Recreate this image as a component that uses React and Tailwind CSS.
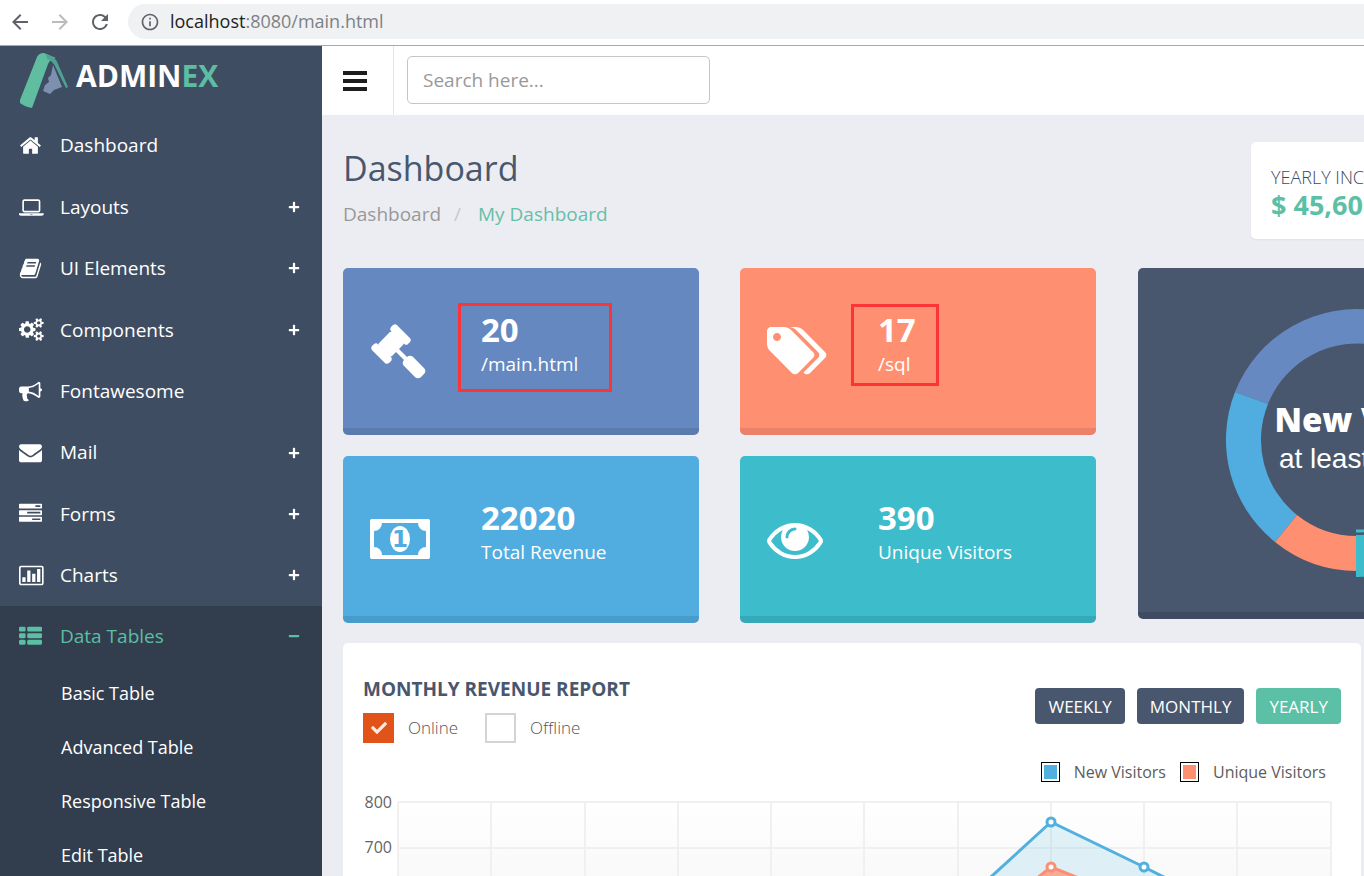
import { useState } from "react";
import { FaCheck, FaPlus, FaMinus } from "react-icons/fa";
import { MdArrowBack, MdArrowForward, MdRefresh, MdInfoOutline } from "react-icons/md";

const icons = {
  home: {
    width: 1792,
    path: "M1472 992v480q0 26-19 45t-45 19h-384v-384h-256v384h-384q-26 0-45-19t-19-45v-480q0-1 .5-3t.5-3l575-474 575 474q1 2 1 6zm223-69l-62 74q-8 9-21 11h-3q-13 0-21-7l-692-577-692 577q-12 8-24 7-13-2-21-11l-62-74q-8-10-7-23.5t11-21.5l719-599q32-26 76-26t76 26l244 204v-195q0-14 9-23t23-9h192q14 0 23 9t9 23v408l219 182q10 8 11 21.5t-7 23.5z",
  },
  laptop: {
    width: 1920,
    path: "M416 1280q-66 0-113-47t-47-113v-704q0-66 47-113t113-47h1088q66 0 113 47t47 113v704q0 66-47 113t-113 47h-1088zm-32-864v704q0 13 9.5 22.5t22.5 9.5h1088q13 0 22.5-9.5t9.5-22.5v-704q0-13-9.5-22.5t-22.5-9.5h-1088q-13 0-22.5 9.5t-9.5 22.5zm1376 928h160v96q0 40-47 68t-113 28h-1600q-66 0-113-28t-47-68v-96h1760zm-720 96q16 0 16-16t-16-16h-160q-16 0-16 16t16 16h160z",
  },
  book: {
    width: 1792,
    path: "M1703 478q40 57 18 129l-275 906q-19 64-76.5 107.5t-122.5 43.5h-923q-77 0-148.5-53.5t-99.5-131.5q-24-67-2-127 0-4 3-27t4-37q1-8-3-21.5t-3-19.5q2-11 8-21t16.5-23.5 16.5-23.5q23-38 45-91.5t30-91.5q3-10 .5-30t-.5-28q3-11 17-28t17-23q21-36 42-92t25-90q1-9-2.5-32t.5-28q4-13 22-30.5t22-22.5q19-26 42.5-84.5t27.5-96.5q1-8-3-25.5t-2-26.5q2-8 9-18t18-23 17-21q8-12 16.5-30.5t15-35 16-36 19.5-32 26.5-23.5 36-11.5 47.5 5.5l-1 3q38-9 51-9h761q74 0 114 56t18 130l-274 906q-36 119-71.5 153.5t-128.5 34.5h-869q-27 0-38 15-11 16-1 43 24 70 144 70h923q29 0 56-15.5t35-41.5l300-987q7-22 5-57 38 15 59 43zm-1064 2q-4 13 2 22.5t20 9.5h608q13 0 25.5-9.5t16.5-22.5l21-64q4-13-2-22.5t-20-9.5h-608q-13 0-25.5 9.5t-16.5 22.5zm-83 256q-4 13 2 22.5t20 9.5h608q13 0 25.5-9.5t16.5-22.5l21-64q4-13-2-22.5t-20-9.5h-608q-13 0-25.5 9.5t-16.5 22.5z",
  },
  cogs: {
    width: 1920,
    path: "M896 896q0-106-75-181t-181-75-181 75-75 181 75 181 181 75 181-75 75-181zm768 512q0-52-38-90t-90-38-90 38-38 90q0 53 37.5 90.5t90.5 37.5 90.5-37.5 37.5-90.5zm0-1024q0-52-38-90t-90-38-90 38-38 90q0 53 37.5 90.5t90.5 37.5 90.5-37.5 37.5-90.5zm-384 421v185q0 10-7 19.5t-16 10.5l-155 24q-11 35-32 76 34 48 90 115 7 11 7 20 0 12-7 19-23 30-82.5 89.5t-78.5 59.5q-11 0-21-7l-115-90q-37 19-77 31-11 108-23 155-7 24-30 24h-186q-11 0-20-7.5t-10-17.5l-23-153q-34-10-75-31l-118 89q-7 7-20 7-11 0-21-8-144-133-144-160 0-9 7-19 10-14 41-53t47-61q-23-44-35-82l-152-24q-10-1-17-9.5t-7-19.5v-185q0-10 7-19.5t16-10.5l155-24q11-35 32-76-34-48-90-115-7-11-7-20 0-12 7-20 22-30 82-89t79-59q11 0 21 7l115 90q34-18 77-32 11-108 23-154 7-24 30-24h186q11 0 20 7.5t10 17.5l23 153q34 10 75 31l118-89q8-7 20-7 11 0 21 8 144 133 144 160 0 8-7 19-12 16-42 54t-45 60q23 48 34 82l152 23q10 2 17 10.5t7 19.5zm640 533v140q0 16-149 31-12 27-30 52 51 113 51 138 0 4-4 7-122 71-124 71-8 0-46-47t-52-68q-20 2-30 2t-30-2q-14 21-52 68t-46 47q-2 0-124-71-4-3-4-7 0-25 51-138-18-25-30-52-149-15-149-31v-140q0-16 149-31 13-29 30-52-51-113-51-138 0-4 4-7 4-2 35-20t59-34 30-16q8 0 46 46.5t52 67.5q20-2 30-2t30 2q51-71 92-112l6-2q4 0 124 70 4 3 4 7 0 25-51 138 17 23 30 52 149 15 149 31zm0-1024v140q0 16-149 31-12 27-30 52 51 113 51 138 0 4-4 7-122 71-124 71-8 0-46-47t-52-68q-20 2-30 2t-30-2q-14 21-52 68t-46 47q-2 0-124-71-4-3-4-7 0-25 51-138-18-25-30-52-149-15-149-31v-140q0-16 149-31 13-29 30-52-51-113-51-138 0-4 4-7 4-2 35-20t59-34 30-16q8 0 46 46.5t52 67.5q20-2 30-2t30 2q51-71 92-112l6-2q4 0 124 70 4 3 4 7 0 25-51 138 17 23 30 52 149 15 149 31z",
  },
  bullhorn: {
    width: 1792,
    path: "M1664 640q53 0 90.5 37.5t37.5 90.5-37.5 90.5-90.5 37.5v384q0 52-38 90t-90 38q-417-347-812-380-58 19-91 66t-31 100.5 40 92.5q-20 33-23 65.5t6 58 33.5 55 48 50 61.5 50.5q-29 58-111.5 83t-168.5 11.5-132-55.5q-7-23-29.5-87.5t-32-94.5-23-89-15-101 3.5-98.5 22-110.5h-122q-66 0-113-47t-47-113v-192q0-66 47-113t113-47h480q435 0 896-384 52 0 90 38t38 90v384zm-128 604v-954q-394 302-768 343v270q377 42 768 341z",
  },
  envelope: {
    width: 1792,
    path: "M1792 710v794q0 66-47 113t-113 47h-1472q-66 0-113-47t-47-113v-794q44 49 101 87 362 246 497 345 57 42 92.5 65.5t94.5 48 110 24.5h2q51 0 110-24.5t94.5-48 92.5-65.5q170-123 498-345 57-39 100-87zm0-294q0 79-49 151t-122 123q-376 261-468 325-10 7-42.5 31t-54 38.5-52 32.5-57.5 27-50 9h-2q-23 0-50-9t-57.5-27-52-32.5-54-38.5-42.5-31q-91-64-262-182.5t-205-142.5q-62-42-117-115.5t-55-136.5q0-78 41.5-130t118.5-52h1472q65 0 112.5 47t47.5 113z",
  },
  tasks: {
    width: 1792,
    path: "M1024 1408h640v-128h-640v128zm-384-512h1024v-128h-1024v128zm640-512h384v-128h-384v128zm512 832v256q0 26-19 45t-45 19h-1664q-26 0-45-19t-19-45v-256q0-26 19-45t45-19h1664q26 0 45 19t19 45zm0-512v256q0 26-19 45t-45 19h-1664q-26 0-45-19t-19-45v-256q0-26 19-45t45-19h1664q26 0 45 19t19 45zm0-512v256q0 26-19 45t-45 19h-1664q-26 0-45-19t-19-45v-256q0-26 19-45t45-19h1664q26 0 45 19t19 45z",
  },
  chart: {
    width: 1920,
    path: "M160 128h1600q66 0 113 47t47 113v1216q0 66-47 113t-113 47h-1600q-66 0-113-47t-47-113v-1216q0-66 47-113t113-47zm0 128q-13 0-22.5 9.5t-9.5 22.5v1216q0 13 9.5 22.5t22.5 9.5h1600q13 0 22.5-9.5t9.5-22.5v-1216q0-13-9.5-22.5t-22.5-9.5zM256 1024h256v384h-256zM640 512h256v896h-256zM1024 768h256v640h-256zM1408 384h256v1024h-256z",
  },
  thList: {
    width: 1792,
    path: "M512 1248v192q0 40-28 68t-68 28h-320q-40 0-68-28t-28-68v-192q0-40 28-68t68-28h320q40 0 68 28t28 68zm0-512v192q0 40-28 68t-68 28h-320q-40 0-68-28t-28-68v-192q0-40 28-68t68-28h320q40 0 68 28t28 68zm1280 512v192q0 40-28 68t-68 28h-960q-40 0-68-28t-28-68v-192q0-40 28-68t68-28h960q40 0 68 28t28 68zm-1280-1024v192q0 40-28 68t-68 28h-320q-40 0-68-28t-28-68v-192q0-40 28-68t68-28h320q40 0 68 28t28 68zm1280 512v192q0 40-28 68t-68 28h-960q-40 0-68-28t-28-68v-192q0-40 28-68t68-28h960q40 0 68 28t28 68zm0-512v192q0 40-28 68t-68 28h-960q-40 0-68-28t-28-68v-192q0-40 28-68t68-28h960q40 0 68 28t28 68z",
  },
  gavel: {
    width: 1792,
    path: "M1771 1536q0 53-37 90l-107 108q-39 37-91 37-53 0-90-37l-363-364q-38-36-38-90 0-53 43-96l-256-256-126 126q-14 14-34 14t-34-14q2 2 12.5 12t12.5 13 10 11.5 10 13.5 6 13.5 5.5 16.5 1.5 18q0 38-28 68-3 3-16.5 18t-19 20.5-18.5 16.5-22 15.5-22 9-26 4.5q-40 0-68-28l-408-408q-28-28-28-68 0-13 4.5-26t9-22 15.5-22 16.5-18.5 20.5-19 18-16.5q30-28 68-28 10 0 18 1.5t16.5 5.5 13.5 6 13.5 10 11.5 10 13 12.5 12 12.5q-14-14-14-34t14-34l348-348q14-14 34-14t34 14q-2-2-12.5-12t-12.5-13-10-11.5-10-13.5-6-13.5-5.5-16.5-1.5-18q0-38 28-68 3-3 16.5-18t19-20.5 18.5-16.5 22-15.5 22-9 26-4.5q40 0 68 28l408 408q28 28 28 68 0 13-4.5 26t-9 22-15.5 22-16.5 18.5-20.5 19-18 16.5q-30 28-68 28-10 0-18-1.5t-16.5-5.5-13.5-6-13.5-10-11.5-10-13-12.5-12-12.5q14 14 14 34t-14 34l-126 126 256 256q43-43 96-43 52 0 91 37l363 363q37 39 37 91z",
  },
  tags: {
    width: 1920,
    path: "M448 448q0-53-37.5-90.5t-90.5-37.5-90.5 37.5-37.5 90.5 37.5 90.5 90.5 37.5 90.5-37.5 37.5-90.5zm1067 576q0 53-37 90l-491 492q-39 37-91 37-53 0-90-37l-715-716q-38-37-64.5-101t-26.5-117v-416q0-52 38-90t90-38h416q53 0 117 26.5t102 64.5l715 714q37 39 37 91zm384 0q0 53-37 90l-491 492q-39 37-91 37-36 0-59-14t-53-45l470-470q37-37 37-90 0-52-37-91l-715-714q-38-38-102-64.5t-117-26.5h224q53 0 117 26.5t102 64.5l715 714q37 39 37 91z",
  },
  eye: {
    width: 1792,
    path: "M1664 960q-152-236-381-353 61 104 61 225 0 185-131.5 316.5t-316.5 131.5-316.5-131.5-131.5-316.5q0-121 61-225-229 117-381 353 133 205 333.5 326.5t434.5 121.5 434.5-121.5 333.5-326.5zm-720-384q0-20-14-34t-34-14q-125 0-214.5 89.5t-89.5 214.5q0 20 14 34t34 14 34-14 14-34q0-86 61-147t147-61q20 0 34-14t14-34zm848 384q0 34-20 69-140 230-376.5 368.5t-499.5 138.5-499.5-139-376.5-368q-20-35-20-69t20-69q140-229 376.5-368t499.5-139 499.5 139 376.5 368q20 35 20 69z",
  },
};

const navItems = [
  { label: "Dashboard", icon: "home" },
  { label: "Layouts", icon: "laptop", expandable: true },
  { label: "UI Elements", icon: "book", expandable: true },
  { label: "Components", icon: "cogs", expandable: true },
  { label: "Fontawesome", icon: "bullhorn" },
  { label: "Mail", icon: "envelope", expandable: true },
  { label: "Forms", icon: "tasks", expandable: true },
  { label: "Charts", icon: "chart", expandable: true },
];

const tableItems = ["Basic Table", "Advanced Table", "Responsive Table", "Edit Table"];

const stats = [
  { value: "20", label: "/main.html", icon: "gavel", color: "bg-[#6488bf] border-[#5b7bae]", mark: "left-[115px] top-[35px] h-[89px] w-[154px]" },
  { value: "17", label: "/sql", icon: "tags", color: "bg-[#ff8f71] border-[#eb8168]", mark: "left-[111px] top-[36px] h-[82px] w-[88px]" },
  { value: "22020", label: "Total Revenue", icon: "money", color: "bg-[#51ade0] border-[#479ccb]" },
  { value: "390", label: "Unique Visitors", icon: "eye", color: "bg-[#3dbccc] border-[#36a9b8]" },
];

const Icon = ({ name, className }) => (
  <svg viewBox={`0 0 ${icons[name].width} 1792`} fill="currentColor" className={className} aria-hidden="true">
    <path d={icons[name].path} />
  </svg>
);

const MoneyIcon = ({ className }) => (
  <svg viewBox="0 0 1920 1792" fill="currentColor" className={className} aria-hidden="true">
    <path d="M1792 1152v-512q-106 0-181-75t-75-181h-1152q0 106-75 181t-181 75v512q106 0 181 75t75 181h1152q0-106 75-181t181-75zm128-832v1152q0 26-19 45t-45 19h-1792q-26 0-45-19t-19-45v-1152q0-26 19-45t45-19h1792q26 0 45 19t19 45z" />
    <ellipse cx="960" cy="896" rx="320" ry="416" />
    <text x="960" y="1152" textAnchor="middle" fontSize="740" fontWeight="700" fontFamily="DejaVu Sans, sans-serif" fill="#51ade0">1</text>
  </svg>
);

const BrowserBar = () => (
  <div className="flex h-[46px] items-center border-b border-[#a9a9ab] bg-white pb-0.5 pl-2 text-[#5f6368]">
    <button type="button" aria-label="Back" className="mr-4"><MdArrowBack className="size-6" /></button>
    <button type="button" aria-label="Forward" className="mr-4 text-[#b9bbbd]"><MdArrowForward className="size-6" /></button>
    <button type="button" aria-label="Reload" className="mr-4"><MdRefresh className="size-6" /></button>
    <div className="flex h-[35px] flex-1 items-center rounded-l-full bg-[#f0f1f3] pl-3">
      <MdInfoOutline className="mr-2.5 size-5" />
      <span className="text-[18px] text-[#7d8186]"><span className="text-[#202124]">localhost</span>:8080/main.html</span>
    </div>
  </div>
);

const Logo = () => (
  <a href="#" className="flex h-[69px] shrink-0 items-start pl-5 pt-[7px]">
    <svg viewBox="0 0 48 56" className="h-14 w-12" aria-hidden="true">
      <path d="M0 47 17 4Q19 0 24 0L36 5Q30 6 28 11L12 55Q5 54 0 50Z" fill="#61bd9f" />
      <path d="M26 1Q36 4 38 11L48 34 46 35 36 15Q33 8 27 6Z" fill="#4fa392" />
      <path d="M33 12 42 34 34 37 30 41 23 38 25 32 29 29 28 25 31 22Z" fill="#7d90ad" />
    </svg>
    <span className="ml-2 text-[30px] font-bold leading-[45px] text-white">ADMIN<span className="text-[#5dbda3]">EX</span></span>
  </a>
);

const Sidebar = () => (
  <aside className="flex w-[322px] shrink-0 flex-col bg-[#3f4d62] text-[19px] text-white">
    <Logo />
    <nav className="flex min-h-0 flex-1 flex-col">
      <ul className="grid h-[491px] shrink-0 auto-rows-fr">
        {navItems.map((item) => (
          <li key={item.label}>
            <a href="#" className="flex h-full items-center pl-[19px] pr-[22px]">
              <span className="w-[41px]"><Icon name={item.icon} className="h-[23px]" /></span>
              {item.label}
              {item.expandable && <FaPlus className="ml-auto size-3" />}
            </a>
          </li>
        ))}
      </ul>
      <div className="flex-1 bg-[#323d4e]">
        <a href="#" className="flex h-[60px] items-center pl-[19px] pr-[22px] text-[#5bbfa4]">
          <span className="w-[41px]"><Icon name="thList" className="h-[23px]" /></span>
          Data Tables
          <FaMinus className="ml-auto size-3" />
        </a>
        <ul className="text-[18px]">
          {tableItems.map((label) => (
            <li key={label}>
              <a href="#" className="flex h-[54px] items-center pl-[61px]">{label}</a>
            </li>
          ))}
        </ul>
      </div>
    </nav>
  </aside>
);

const StatCard = ({ stat }) => (
  <div className={`relative flex h-[167px] rounded-[5px] border-b-[7px] pl-[27px] text-white ${stat.color}`}>
    <div className="w-[111px] pt-[55px]">
      {stat.icon === "money" ? <MoneyIcon className="h-14" /> : <Icon name={stat.icon} className="h-14" />}
    </div>
    <div className="pt-[42px]">
      <div className="text-[33px] font-bold leading-[40px]">{stat.value}</div>
      <div className="text-[19px] leading-7">{stat.label}</div>
    </div>
    {stat.mark && <div className={`absolute border-[3px] border-[#fb3537] ${stat.mark}`} />}
  </div>
);

const VisitorsDonut = () => (
  <div className="h-[351px] rounded-[5px] border-b-[7px] border-[#3e4b61] bg-[#48576e] pl-[79px] pt-8">
    <svg viewBox="0 0 280 280" className="size-[280px]">
      <path d="M162 11A131 131 0 0 0 18 92L51 104A96 96 0 0 1 162 46Z" fill="#6789c1" />
      <path d="M18 92A131 131 0 0 0 58 242L80 215A96 96 0 0 1 51 104Z" fill="#51ade0" />
      <path d="M58 242A131 131 0 0 0 140 271V236A96 96 0 0 1 80 215Z" fill="#ff8f71" />
      <path d="M139 277A137 137 0 0 0 215 25L192 61A95 95 0 0 1 139 235Z" fill="#3dbccc" />
      <path d="M139 231A91 91 0 0 0 190 64" fill="none" stroke="#3dbccc" strokeWidth="3" />
      <text x="139" y="132" textAnchor="middle" fontSize="33" fontWeight="800" fontFamily="Open Sans, sans-serif" fill="#fff">New Visit</text>
      <text x="139" y="168" textAnchor="middle" fontSize="28" fontFamily="Liberation Sans, Arial, sans-serif" fill="#fff">at least 70%</text>
    </svg>
  </div>
);

const RevenueChart = () => {
  const columns = [35, 128, 222, 315, 408, 501, 595, 688, 781, 874, 968];
  const blue = "35,360 128,300 222,250 315,220 408,200 501,170 595,116 688,31 781,76 874,123 968,160";
  const orange = "35,370 128,340 222,310 315,280 408,240 501,200 595,150 688,76 781,113 874,160 968,200";

  return (
    <svg viewBox="0 0 978 380" className="block w-full">
      <defs>
        <linearGradient id="plot" x1="0" y1="0" x2="0" y2="1">
          <stop offset="0" stopColor="#fff" />
          <stop offset="0.2" stopColor="#f9f9f9" />
        </linearGradient>
      </defs>
      <rect x="35" y="11" width="933" height="369" fill="url(#plot)" />
      {columns.map((x) => <path key={x} d={`M${x} 11V380`} stroke="#f0f0f1" strokeWidth="2" />)}
      {[11, 57, 103, 149].map((y) => <path key={y} d={`M35 ${y}H968`} stroke="#f0f0f1" strokeWidth="2" />)}
      {["800", "700", "600"].map((label, i) => (
        <text key={label} x="29" y={17 + i * 45} textAnchor="end" fontSize="16" fill="#646464">{label}</text>
      ))}
      <polygon points={`35,380 ${blue} 968,380`} fill="#51b5dc" fillOpacity="0.17" />
      <polyline points={blue} fill="none" stroke="#51b0de" strokeWidth="3" />
      <polygon points={`35,380 ${orange} 968,380`} fill="#ff8f71" fillOpacity="0.7" />
      <polyline points={orange} fill="none" stroke="#fb8f75" strokeWidth="3" />
      {[[688, 31], [781, 76], [595, 116]].map(([x, y]) => (
        <circle key={x} cx={x} cy={y} r="4" fill="#fff" stroke="#51b0de" strokeWidth="3" />
      ))}
      <circle cx="688" cy="76" r="4" fill="#fff" stroke="#fb8f75" strokeWidth="3" />
    </svg>
  );
};

const RevenueReport = () => {
  const [online, setOnline] = useState(true);
  const [offline, setOffline] = useState(false);
  const [period, setPeriod] = useState("YEARLY");

  const filters = [
    { label: "Online", checked: online, onChange: setOnline },
    { label: "Offline", checked: offline, onChange: setOffline },
  ];

  return (
    <section className="w-[1018px] rounded-[5px] bg-white px-5 pt-8">
      <div className="flex justify-between">
        <div>
          <h2 className="text-[19px] font-bold leading-7 text-[#48576e]">MONTHLY REVENUE REPORT</h2>
          <div className="mt-2.5 flex gap-[27px] text-[17px] font-light text-[#555]">
            {filters.map((filter) => (
              <label key={filter.label} className="flex items-center gap-3.5">
                <span className="relative flex">
                  <input
                    type="checkbox"
                    checked={filter.checked}
                    onChange={(e) => filter.onChange(e.target.checked)}
                    className="h-[30px] w-[31px] appearance-none border-2 border-[#d4d4d4] bg-white checked:border-[#e2531a] checked:bg-[#e2531a]"
                  />
                  {filter.checked && <FaCheck className="pointer-events-none absolute left-2 top-[7px] size-4 text-[#f9e9e0]" />}
                </span>
                {filter.label}
              </label>
            ))}
          </div>
        </div>
        <div className="mt-[13px] flex items-start gap-3">
          {["WEEKLY", "MONTHLY", "YEARLY"].map((name) => (
            <button
              key={name}
              type="button"
              onClick={() => setPeriod(name)}
              className={`h-9 rounded px-[13px] pt-0.5 text-[17px] text-white ${period === name ? "bg-[#5bc0a5]" : "bg-[#48576e]"}`}
            >
              {name}
            </button>
          ))}
        </div>
      </div>
      <div className="mt-[17px] flex h-6 items-center justify-end gap-3.5 pr-[15px] text-base text-[#5c5c5c]">
        <span className="h-5 w-[19px] border border-black bg-[#51b0de] p-px outline-2 -outline-offset-3 outline-white" />
        <span>New Visitors</span>
        <span className="h-5 w-[19px] border border-black bg-[#ff8f71] p-px outline-2 -outline-offset-3 outline-white" />
        <span>Unique Visitors</span>
      </div>
      <div className="mt-[7px]">
        <RevenueChart />
      </div>
    </section>
  );
};

const App = () => {
  return (
    <div className="flex h-screen flex-col overflow-hidden bg-[#ecedf2] font-['Open_Sans','Noto_Sans',sans-serif]">
      <BrowserBar />
      <div className="flex min-h-0 flex-1">
        <Sidebar />
        <main className="min-w-0 flex-1 overflow-hidden">
          <header className="flex h-[69px] bg-white">
            <button type="button" aria-label="Toggle menu" className="flex w-[72px] flex-col justify-center gap-1 border-r border-[#e6e6e8] pl-[21px]">
              <span className="h-1 w-6 bg-[#1d1d1d]" />
              <span className="h-1 w-6 bg-[#1d1d1d]" />
              <span className="h-1 w-6 bg-[#1d1d1d]" />
            </button>
            <input
              type="text"
              aria-label="Search"
              placeholder="Search here..."
              className="ml-[13px] mt-2.5 h-12 w-[303px] rounded-[5px] border border-[#c6c6c6] px-[15px] text-[19px] placeholder:text-[#999]"
            />
          </header>
          <div className="ml-[21px] w-[1548px]">
            <div className="flex h-[153px] pt-[27px]">
              <div className="w-[908px]">
                <h1 className="mt-[3px] text-[34px] leading-[46px] text-[#48576e]">Dashboard</h1>
                <div className="mt-[9px] flex text-[19px] leading-7">
                  <a href="#" className="text-[#999]">Dashboard</a>
                  <span className="pl-[13px] pr-[17px] text-[#c8c8ca]">/</span>
                  <a href="#" className="text-[#65bfa7]">My Dashboard</a>
                </div>
              </div>
              <div className="h-[97px] w-[310px] rounded-[5px] bg-white pl-5 pt-[23px] shadow-xs">
                <div className="text-[18px] font-light leading-6 text-[#3a4a62]">YEARLY INCOME</div>
                <div className="text-[27px] font-bold leading-8 text-[#5bc0a5]">$ 45,600</div>
              </div>
            </div>
            <div className="flex gap-[42px]">
              <div className="grid w-[753px] grid-cols-2 gap-x-[41px] gap-y-[21px]">
                {stats.map((stat) => <StatCard key={stat.label} stat={stat} />)}
              </div>
              <div className="flex-1">
                <VisitorsDonut />
              </div>
            </div>
            <div className="mt-5">
              <RevenueReport />
            </div>
          </div>
        </main>
      </div>
    </div>
  );
};

export default App;
